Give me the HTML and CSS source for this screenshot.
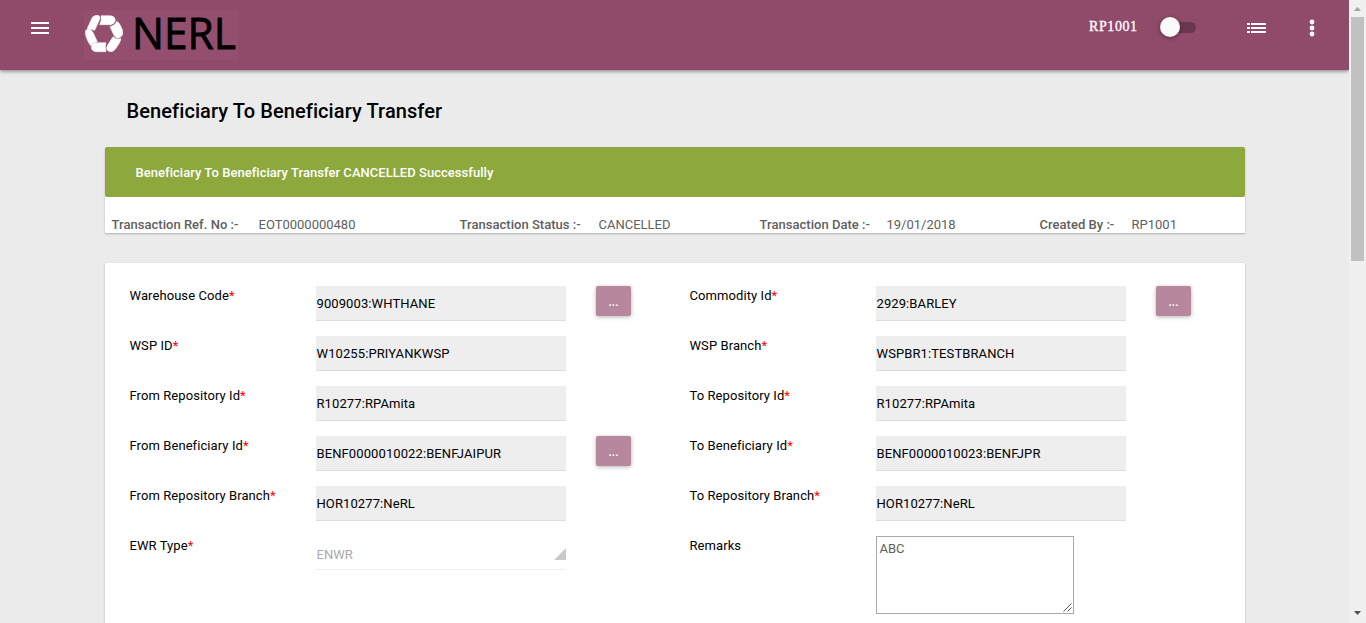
FILE: index.html
```html
<!DOCTYPE html>
<html lang="en">
<head>
<meta charset="utf-8">
<title>Beneficiary To Beneficiary Transfer</title>
<link rel="stylesheet" href="styles.css">
</head>
<body>
<div class="page">
  <header class="topbar">
    <svg class="menu" width="18" height="12" viewBox="0 0 18 12"><path d="M0 0h18v2H0zM0 5h18v2H0zM0 10h18v2H0z" fill="#fff"/></svg>
    <svg class="logo" width="154" height="50" viewBox="252 30 462 150">
      <rect x="252" y="30" width="462" height="150" fill="#944f6f"/>
      <g fill="#fff" stroke="#fff" stroke-width="1.500">
        <path d="M277 52q9-9 20-5q5 6 0 16l-13 28q-11-5-22-3q0-7 5-14z"/>
        <path d="M303 47h30q12 2 13 13q-2 12-13 14h-34q7-14 4-27z"/>
        <path d="M350 64q8 3 12 14q7 10 6 24q-3 10-13 12q-9 0-14-10l-11-24q16-3 20-16z"/>
        <path d="M339 110q11 10 24 6q-1 8-9 20q-8 14-15 18q-11 3-18-4q-3-7 2-15z"/>
        <path d="M318 128q-4 13 0 27h-32q-11-2-12-13q2-12 12-14z"/>
        <path d="M257 91q7-5 15-2q6 5 9 12l11 24q-13 1-19 13q-9-10-13-23q-6-11-3-24z"/>
      </g>
      <text x="396" y="147" class="logo-text" textLength="312" lengthAdjust="spacingAndGlyphs">NERL</text>
    </svg>
    <div class="tools">
      <span class="user">RP1001</span>
      <span class="switch"><span class="knob"></span></span>
      <svg class="list" width="20" height="12" viewBox="0 0 20 12"><path d="M0 1h3v2H0zM4 1h15v2H4zM0 5h3v2H0zM4 5h15v2H4zM0 9h3v2H0zM4 9h15v2H4z" fill="#fff"/></svg>
      <svg class="more" width="6" height="18" viewBox="0 0 6 18"><g fill="#fff"><circle cx="3" cy="3" r="2.4"/><circle cx="3" cy="9" r="2.4"/><circle cx="3" cy="15" r="2.4"/></g></svg>
    </div>
  </header>
  <main class="content">
    <h1>Beneficiary To Beneficiary Transfer</h1>
    <section class="summary">
      <div class="alert">Beneficiary To Beneficiary Transfer CANCELLED Successfully</div>
      <div class="facts">
        <b>Transaction Ref. No :-</b><span>EOT0000000480</span>
        <b>Transaction Status :-</b><span>CANCELLED</span>
        <b>Transaction Date :-</b><span>19/01/2018</span>
        <b>Created By :-</b><span>RP1001</span>
      </div>
    </section>
    <section class="form">
      <label>Warehouse Code<i>*</i></label><div class="field">9009003:WHTHANE</div><button>...</button>
      <label>Commodity Id<i>*</i></label><div class="field">2929:BARLEY</div><button>...</button>
      <label>WSP ID<i>*</i></label><div class="field">W10255:PRIYANKWSP</div><span></span>
      <label>WSP Branch<i>*</i></label><div class="field">WSPBR1:TESTBRANCH</div><span></span>
      <label>From Repository Id<i>*</i></label><div class="field">R10277:RPAmita</div><span></span>
      <label>To Repository Id<i>*</i></label><div class="field">R10277:RPAmita</div><span></span>
      <label>From Beneficiary Id<i>*</i></label><div class="field">BENF0000010022:BENFJAIPUR</div><button>...</button>
      <label>To Beneficiary Id<i>*</i></label><div class="field">BENF0000010023:BENFJPR</div><span></span>
      <label>From Repository Branch<i>*</i></label><div class="field">HOR10277:NeRL</div><span></span>
      <label>To Repository Branch<i>*</i></label><div class="field">HOR10277:NeRL</div><span></span>
      <label>EWR Type<i>*</i></label>
      <div class="select">ENWR<svg width="12" height="12" viewBox="0 0 12 12"><path d="M12 0v12H0z" fill="#c9c9c9"/></svg></div><span></span>
      <label>Remarks</label>
      <div class="remarks">ABC<svg width="9" height="9" viewBox="0 0 9 9"><path d="M.5 8.5l8-8M4.500 8.500l4-4" stroke="#555" fill="none"/></svg></div><span></span>
    </section>
  </main>
</div>
<aside class="scrollbar">
  <svg width="7" height="4" viewBox="0 0 7 4"><path d="M0 4L3.500 0L7 4z" fill="#a3a3a3"/></svg>
  <div class="thumb"></div>
  <svg class="down" width="7" height="4" viewBox="0 0 7 4"><path d="M0 0L3.500 4L7 0z" fill="#505050"/></svg>
</aside>
</body>
</html>
```
FILE: styles.css
```css
* { box-sizing: border-box; }
body {
  margin: 0;
  height: 623px;
  display: flex;
  overflow: hidden;
  background: #ebebeb;
  font: 13px/20px Roboto, sans-serif;
  color: #000;
}
.page { width: 1349px; height: 623px; overflow: hidden; }
.topbar {
  height: 70px;
  display: flex;
  align-items: flex-start;
  background: #904a6a;
  box-shadow: 0 1px 4px rgba(0,0,0,.5);
}
.menu { margin: 22px 0 0 31px; }
.logo { margin: 10px 0 0 35px; overflow: visible; }
.logo-text { font: 132px "Open Sans", sans-serif; fill: #000; stroke: #000; stroke-width: 2.5px; }
.tools { display: flex; margin-left: auto; }
.user {
  width: 71px;
  margin-top: 17px;
  font: 14px/20px "Liberation Serif", serif;
  color: #fff;
  -webkit-text-stroke: .35px #fff;
  letter-spacing: .6px;
}
.switch { width: 36px; height: 11px; margin-top: 22px; border-radius: 6px; background: #6a3750; }
.knob { display: block; width: 20px; height: 20px; margin-top: -5px; border-radius: 50%; background: #fafafa; box-shadow: 0 1px 4px rgba(0,0,0,.4); }
.list { margin: 22px 0 0 51px; }
.more { margin: 19px 34px 0 42px; }
.content { width: 1140px; margin-left: 105px; }
h1 { margin: 28px 0 23px 21.5px; font: 500 20px/26px Roboto, sans-serif; letter-spacing: .09px; }
.summary, .form { background: #fff; box-shadow: 0 1px 2px rgba(0,0,0,.26); }
.summary { height: 86px; border-radius: 2px 2px 0 0; }
.alert { height: 50px; padding: 16px 30.5px; border-radius: 2px; background: #8da93e; color: #fff; font-weight: 500; letter-spacing: .04px; }
.facts {
  display: grid;
  grid-template-columns: 147px 201px 139px 161px 127px 153px 92px auto;
  padding: 18px 0 0 6.5px;
  color: #606060;
}
.facts b { font-weight: 500; letter-spacing: .03px; }
.form {
  height: 420px;
  margin-top: 30px;
  padding: 23px 0 0 25px;
  display: grid;
  grid-template-columns: 186px 280px 94px 186px 280px 94px;
  grid-auto-rows: 50px;
  align-items: start;
}
label { margin-left: -.5px; letter-spacing: .08px; }
label i { color: red; font-style: normal; }
.field { width: 250px; height: 35px; padding: 8px .5px 6px; background: #eee; border-bottom: 1px solid #ddd; letter-spacing: .1px; }
button {
  width: 35px;
  height: 30px;
  padding: 2px 0 0;
  border: 0;
  border-radius: 2px;
  background: #b7889d;
  box-shadow: 0 1px 4px rgba(0,0,0,.3);
  font: 500 12px Roboto, sans-serif;
  color: #fff;
}
.select { width: 250px; height: 34px; padding: 9px 0 0 .5px; display: flex; justify-content: space-between; border-bottom: 1px solid #eee; color: #aaa; }
.select svg { margin-top: 3px; }
.remarks { width: 198px; height: 78px; padding: 2px 1px 1px 2.5px; display: flex; justify-content: space-between; border: 1px solid #a9a9a9; color: #606060; }
.remarks svg { align-self: flex-end; }
.scrollbar { width: 17px; height: 623px; padding: 7px 0 8px; display: flex; flex-direction: column; align-items: center; background: #f0f0f0; }
.thumb { width: 13px; height: 244px; margin-top: 6px; background: #c1c1c1; }
.down { margin-top: auto; }
```
